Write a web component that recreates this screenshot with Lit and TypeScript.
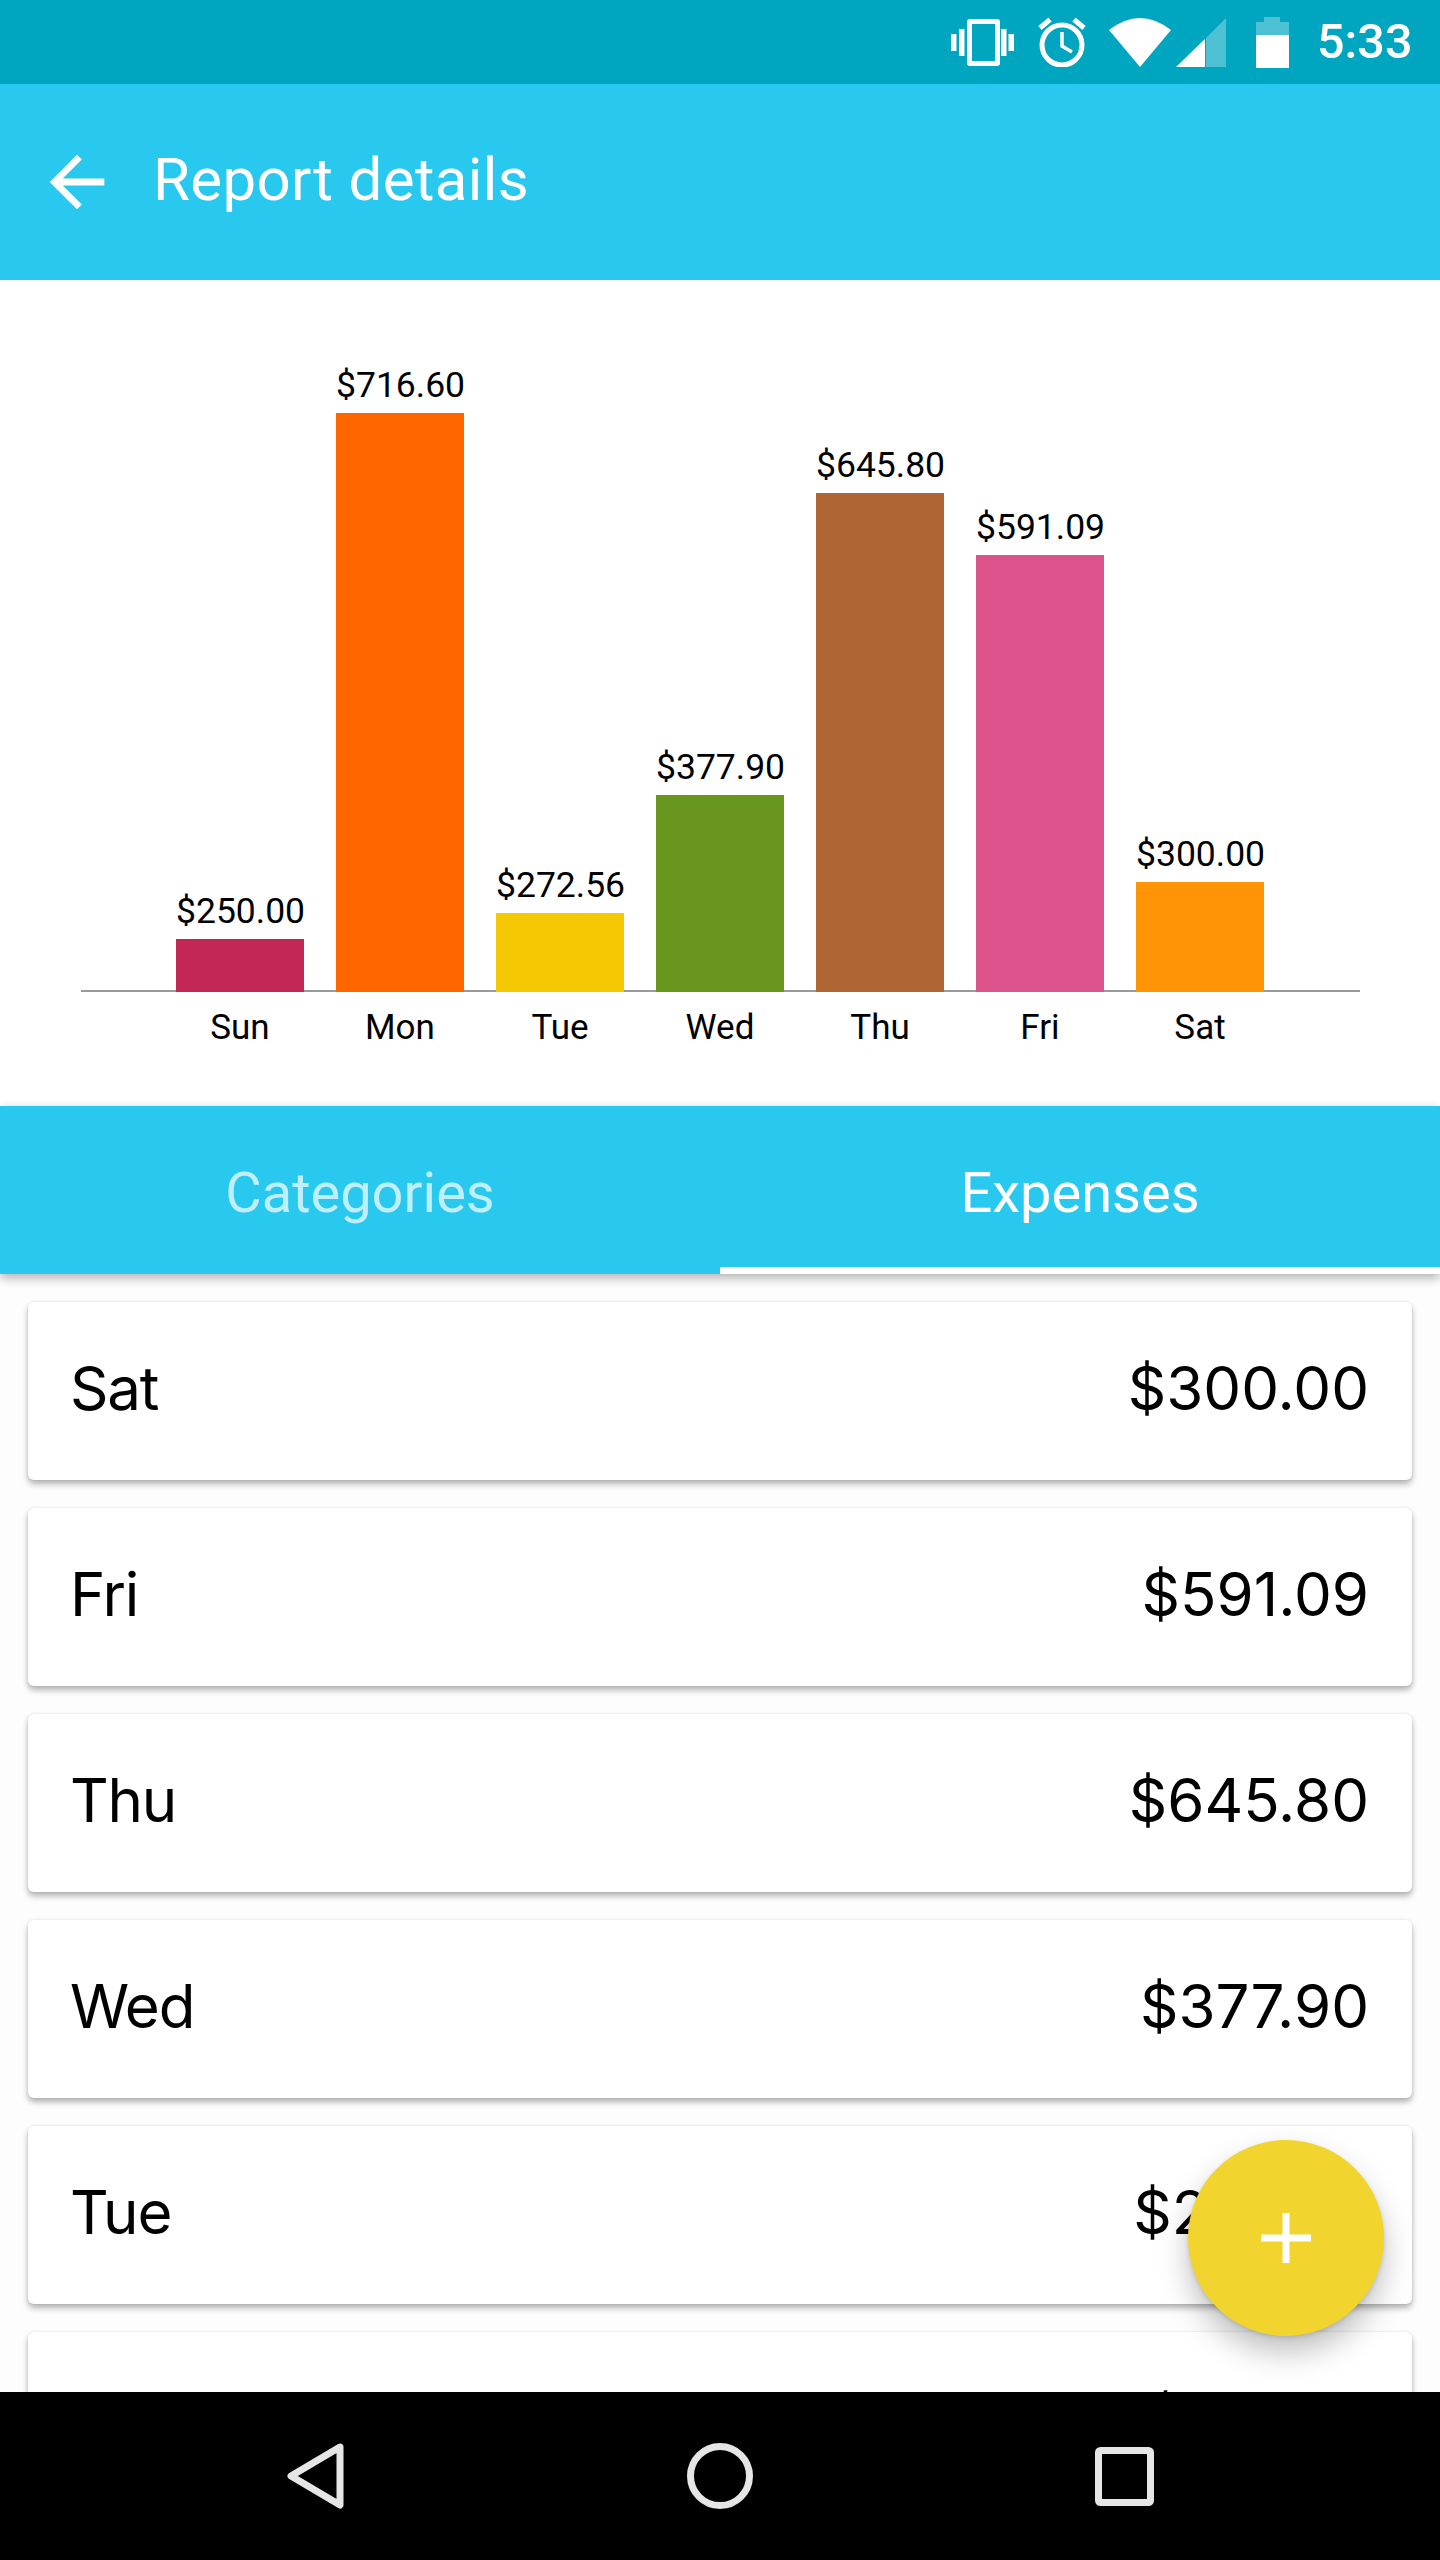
import { LitElement, html, css } from 'lit';
import { customElement, state } from 'lit/decorators.js';
import { classMap } from 'lit/directives/class-map.js';
import { styleMap } from 'lit/directives/style-map.js';

interface DayTotal {
  day: string;
  amount: number;
  color: string;
}

const WEEK: DayTotal[] = [
  { day: 'Sun', amount: 250.0, color: '#c22654' },
  { day: 'Mon', amount: 716.6, color: '#ff6600' },
  { day: 'Tue', amount: 272.56, color: '#f4c802' },
  { day: 'Wed', amount: 377.9, color: '#69961f' },
  { day: 'Thu', amount: 645.8, color: '#b06535' },
  { day: 'Fri', amount: 591.09, color: '#dc538c' },
  { day: 'Sat', amount: 300.0, color: '#ff9506' },
];

// chart axis does not start at zero, the smallest bars would be too tall otherwise
const barHeight = (amount: number) => Math.round((amount - 202.75) * 1.1265);
const money = (amount: number) => `$${amount.toFixed(2)}`;

@customElement('app-root')
export class AppRoot extends LitElement {
  @state() private activeTab = 'Expenses';

  static styles = css`
    :host {
      display: block;
      font-family: Roboto, 'Liberation Sans', sans-serif;
    }

    .screen {
      position: relative;
      display: flex;
      flex-direction: column;
      height: 2560px;
      overflow: hidden;
      background: #fdfdfd;
    }

    .status-bar {
      display: flex;
      align-items: center;
      justify-content: flex-end;
      flex: none;
      height: 84px;
      padding-right: 31px;
      box-sizing: border-box;
      background: #00a5c0;
      color: #fff;
    }

    .status-bar svg {
      display: block;
      flex: none;
    }

    .vibrate { margin-right: 24px; }
    .alarm { margin-right: 23px; }
    .wifi { margin-right: 5px; }
    .signal { margin-right: 30px; }
    .battery { margin-right: 28px; }

    .time {
      width: 92px;
      font-size: 48.5px;
      font-weight: 500;
      line-height: 84px;
      white-space: nowrap;
    }

    .app-bar {
      display: flex;
      align-items: center;
      flex: none;
      height: 196px;
      background: #29c8ef;
      color: #fff;
    }

    .app-bar svg {
      display: block;
      margin-left: 36px;
      fill: #fff;
    }

    .title {
      margin: 0 0 4px 35px;
      font-size: 60px;
      line-height: 72px;
      letter-spacing: 0.35px;
    }

    .chart {
      flex: none;
      height: 826px;
      box-sizing: border-box;
      padding: 0 80px 0 81px;
      background: #fff;
    }

    .plot {
      display: flex;
      align-items: flex-end;
      gap: 32px;
      height: 712px;
      box-sizing: border-box;
      padding-left: 95px;
      border-bottom: 2px solid #999;
    }

    .column {
      width: 128px;
      margin-bottom: -2px;
    }

    .value {
      margin-bottom: 7px;
      font-size: 35.5px;
      line-height: 42px;
      text-align: center;
      color: #000;
      white-space: nowrap;
    }

    .bar {
      width: 128px;
    }

    .days {
      display: flex;
      gap: 32px;
      padding-left: 95px;
      margin-top: 15px;
    }

    .days span {
      width: 128px;
      font-size: 35px;
      line-height: 42px;
      text-align: center;
      color: #000;
    }

    .tabs {
      position: relative;
      z-index: 1;
      display: flex;
      flex: none;
      height: 168px;
      background: #29c8ef;
      box-shadow: 0 4px 10px rgba(0, 0, 0, 0.3);
    }

    .tab {
      flex: 1;
      box-sizing: border-box;
      padding-top: 3px;
      font-size: 56px;
      line-height: 168px;
      text-align: center;
      color: rgba(255, 255, 255, 0.7);
    }

    .tab.active {
      color: #fff;
      box-shadow: inset 0 -7px 0 #fff;
    }

    .list {
      display: flex;
      flex-direction: column;
      flex: 1;
      gap: 28px;
      min-height: 0;
      padding: 28px 28px 0;
      overflow: hidden;
    }

    .card {
      display: flex;
      align-items: center;
      justify-content: space-between;
      flex: none;
      height: 178px;
      box-sizing: border-box;
      padding: 0 43px 6px 42px;
      border-radius: 6px;
      background: #fff;
      box-shadow: 0 4px 6px rgba(0, 0, 0, 0.3), 0 0 3px rgba(0, 0, 0, 0.08);
      font-family: Inter, Roboto, sans-serif;
      font-size: 60px;
      color: #000;
    }

    .card .label {
      letter-spacing: -1.2px;
    }

    .nav {
      position: relative;
      z-index: 2;
      display: flex;
      align-items: center;
      justify-content: center;
      flex: none;
      height: 168px;
      background: #000;
    }

    .nav svg {
      display: block;
      flex: none;
      fill: none;
      stroke: #e6e6e6;
      stroke-width: 7;
      stroke-linejoin: round;
    }

    .nav .back { margin-right: 343px; }
    .nav .recent { margin-left: 342px; }

    .fab {
      position: absolute;
      z-index: 1;
      top: 2140px;
      left: 1188px;
      display: flex;
      align-items: center;
      justify-content: center;
      width: 196px;
      height: 196px;
      border-radius: 50%;
      background: #f2d42e;
      box-shadow: 0 16px 30px rgba(0, 0, 0, 0.25), 0 2px 4px rgba(0, 0, 0, 0.12);
    }

    .fab svg {
      display: block;
      fill: #fff;
    }
  `;

  private renderStatusBar() {
    return html`
      <div class="status-bar">
        <svg class="vibrate" width="63" height="47" viewBox="0 0 63 47" fill="#fff">
          <path fill-rule="evenodd" d="M19 0h27a3 3 0 0 1 3 3v41a3 3 0 0 1-3 3H19a3 3 0 0 1-3-3V3a3 3 0 0 1 3-3zm2 5v37h23V5z" />
          <rect x="0" y="15" width="5.5" height="17" />
          <rect x="8" y="10" width="5.5" height="27" />
          <rect x="50" y="10" width="5.5" height="27" />
          <rect x="57.5" y="15" width="5.5" height="17" />
        </svg>
        <svg class="alarm" width="48" height="50" viewBox="0 0 48 50" fill="none" stroke="#fff">
          <circle cx="24" cy="28" r="20" stroke-width="5" />
          <path d="M24 15v14l10 6" stroke-width="3.5" />
          <path d="M12 2.5 2 11M36 2.5 46 11" stroke-width="5" />
        </svg>
        <svg class="wifi" width="62" height="49" viewBox="0 0 62 49" fill="#fff">
          <path d="M0 12Q31-12 62 12L31 49z" />
        </svg>
        <svg class="signal" width="50" height="49" viewBox="0 0 50 49" fill="#fff">
          <path d="M50 0v49H30V20z" opacity="0.3" />
          <path d="M29 21v28H0z" />
        </svg>
        <svg class="battery" width="33" height="51" viewBox="0 0 33 51" fill="#fff">
          <path d="M8 0h16v5h9v13H0V5h8z" opacity="0.3" />
          <rect x="0" y="18" width="33" height="33" />
        </svg>
        <div class="time">5:33</div>
      </div>
    `;
  }

  private renderChart() {
    return html`
      <div class="chart">
        <div class="plot">
          ${WEEK.map(
            (d) => html`
              <div class="column">
                <div class="value">${money(d.amount)}</div>
                <div class="bar" style=${styleMap({ height: `${barHeight(d.amount)}px`, background: d.color })}></div>
              </div>
            `
          )}
        </div>
        <div class="days">${WEEK.map((d) => html`<span>${d.day}</span>`)}</div>
      </div>
    `;
  }

  protected render() {
    return html`
      <div class="screen">
        ${this.renderStatusBar()}
        <div class="app-bar">
          <svg width="82" height="82" viewBox="0 0 24 24">
            <path d="M20 11H7.83l5.59-5.59L12 4l-8 8 8 8 1.41-1.41L7.83 13H20v-2z" />
          </svg>
          <div class="title">Report details</div>
        </div>
        ${this.renderChart()}
        <div class="tabs">
          ${['Categories', 'Expenses'].map(
            (t) => html`<div class=${classMap({ tab: true, active: t === this.activeTab })}>${t}</div>`
          )}
        </div>
        <div class="list">
          ${[...WEEK].reverse().slice(0, 6).map(
            (d) => html`
              <div class="card">
                <span class="label">${d.day}</span>
                <span>${money(d.amount)}</span>
              </div>
            `
          )}
        </div>
        <div class="fab">
          <svg width="50" height="50" viewBox="0 0 50 50"><path d="M21.5 0h7v21.5H50v7H28.500V50h-7V28.500H0v-7h21.500z" /></svg>
        </div>
        <div class="nav">
          <svg class="back" width="57" height="66" viewBox="0 0 57 66">
            <path d="M53 4 4 33l49 29z" />
          </svg>
          <svg class="home" width="66" height="66" viewBox="0 0 66 66"><circle cx="33" cy="33" r="29.500" /></svg>
          <svg class="recent" width="59" height="59" viewBox="0 0 59 59"><rect x="3.500" y="3.500" width="52" height="52" rx="2" /></svg>
        </div>
      </div>
    `;
  }
}
